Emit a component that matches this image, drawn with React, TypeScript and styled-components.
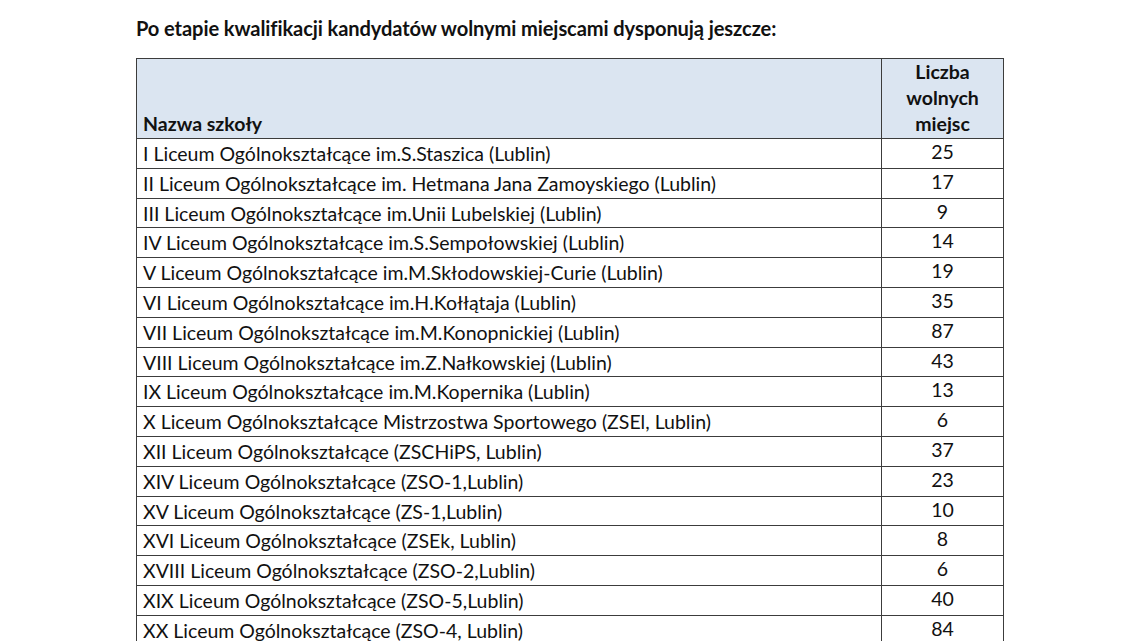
import React from 'react';
import styled, { createGlobalStyle } from 'styled-components';

const GlobalStyle = createGlobalStyle`
  html, body {
    margin: 0;
    padding: 0;
    background: #ffffff;
  }
  body {
    font-family: Lato, "Open Sans", "Liberation Sans", sans-serif;
    color: #111;
  }
`;

const Page = styled.div`
  width: 1140px;
  height: 641px;
  overflow: hidden;
  padding: 16px 0 0 136px;
  box-sizing: border-box;
`;

const Title = styled.h1`
  margin: 0 0 18px 0;
  font-size: 20.1px;
  font-weight: 700;
  line-height: 24px;
  letter-spacing: -0.1px;
`;

const Table = styled.table`
  border-collapse: collapse;
  width: 868px;
  font-size: 19.5px;
`;

const HeadCell = styled.th<{ $center?: boolean }>`
  background: #dbe5f1;
  border: 1.3px solid #3c3c3c;
  font-weight: 700;
  height: 75px;
  padding: 0 6px 1px;
  line-height: 26px;
  vertical-align: bottom;
  text-align: ${(p) => (p.$center ? 'center' : 'left')};
`;

const Cell = styled.td<{ $center?: boolean }>`
  border: 1.3px solid #3c3c3c;
  height: 25.8px;
  padding: ${(p) => (p.$center ? '1px 6px 0' : '3px 6px 0')};
  line-height: 24px;
  vertical-align: top;
  text-align: ${(p) => (p.$center ? 'center' : 'left')};
`;

const rows: [string, number][] = [
  ['I Liceum Ogólnokształcące im.S.Staszica (Lublin)', 25],
  ['II Liceum Ogólnokształcące im. Hetmana Jana Zamoyskiego (Lublin)', 17],
  ['III Liceum Ogólnokształcące im.Unii Lubelskiej (Lublin)', 9],
  ['IV Liceum Ogólnokształcące im.S.Sempołowskiej (Lublin)', 14],
  ['V Liceum Ogólnokształcące im.M.Skłodowskiej-Curie (Lublin)', 19],
  ['VI Liceum Ogólnokształcące im.H.Kołłątaja (Lublin)', 35],
  ['VII Liceum Ogólnokształcące im.M.Konopnickiej (Lublin)', 87],
  ['VIII Liceum Ogólnokształcące im.Z.Nałkowskiej (Lublin)', 43],
  ['IX Liceum Ogólnokształcące im.M.Kopernika (Lublin)', 13],
  ['X Liceum Ogólnokształcące Mistrzostwa Sportowego (ZSEl, Lublin)', 6],
  ['XII Liceum Ogólnokształcące (ZSCHiPS, Lublin)', 37],
  ['XIV Liceum Ogólnokształcące (ZSO-1,Lublin)', 23],
  ['XV Liceum Ogólnokształcące (ZS-1,Lublin)', 10],
  ['XVI Liceum Ogólnokształcące (ZSEk, Lublin)', 8],
  ['XVIII Liceum Ogólnokształcące (ZSO-2,Lublin)', 6],
  ['XIX Liceum Ogólnokształcące (ZSO-5,Lublin)', 40],
  ['XX Liceum Ogólnokształcące (ZSO-4, Lublin)', 84],
];

const App = () => {
  return (
    <>
      <GlobalStyle />
      <Page>
        <Title>Po etapie kwalifikacji kandydatów wolnymi miejscami dysponują jeszcze:</Title>
        <Table>
          <colgroup>
            <col style={{ width: 746 }} />
            <col style={{ width: 122 }} />
          </colgroup>
          <thead>
            <tr>
              <HeadCell>Nazwa szkoły</HeadCell>
              <HeadCell $center>
                Liczba
                <br />
                wolnych
                <br />
                miejsc
              </HeadCell>
            </tr>
          </thead>
          <tbody>
            {rows.map(([name, count]) => (
              <tr key={name}>
                <Cell>{name}</Cell>
                <Cell $center>{count}</Cell>
              </tr>
            ))}
          </tbody>
        </Table>
      </Page>
    </>
  );
};

export default App;
